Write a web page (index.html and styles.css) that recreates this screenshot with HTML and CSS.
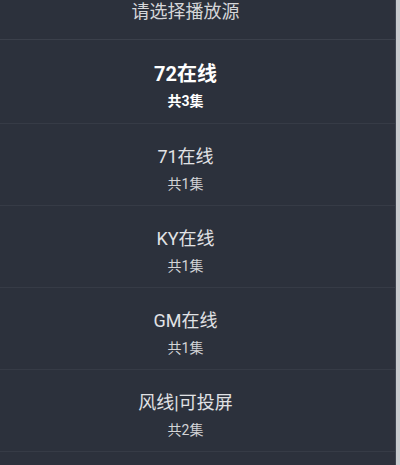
FILE: index.html
```html
<!DOCTYPE html>
<html lang="zh">
<head>
<meta charset="utf-8">
<title>请选择播放源</title>
<link rel="stylesheet" href="styles.css">
</head>
<body>
<div class="screen">
  <div class="panel">
    <div class="header">请选择播放源</div>
    <ul class="list">
      <li class="item active">
        <div class="title">72在线</div>
        <div class="sub">共3集</div>
      </li>
      <li class="item">
        <div class="title">71在线</div>
        <div class="sub">共1集</div>
      </li>
      <li class="item">
        <div class="title">KY在线</div>
        <div class="sub">共1集</div>
      </li>
      <li class="item">
        <div class="title">GM在线</div>
        <div class="sub">共1集</div>
      </li>
      <li class="item">
        <div class="title">风线|可投屏</div>
        <div class="sub">共2集</div>
      </li>
    </ul>
  </div>
  <div class="edge"></div>
</div>
</body>
</html>
```
FILE: styles.css
```css
html, body {
  margin: 0;
  padding: 0;
  height: 100%;
}
body {
  background: #2c313c;
  font-family: "Roboto", "Noto Sans CJK SC", sans-serif;
  overflow: hidden;
}
.screen {
  display: flex;
  height: 465px;
}
.panel {
  flex: 1;
  background: #2c313c;
  display: flex;
  flex-direction: column;
}
.edge {
  width: 4px;
  background: #c9cbcf;
  border-left: 1px solid #3e4450;
}
.header {
  height: 40px;
  box-sizing: border-box;
  border-bottom: 1px solid #3b404b;
  padding-right: 24px;
  text-align: center;
  font-size: 18px;
  line-height: 24px;
  color: #d5d6d9;
}
.list {
  list-style: none;
  margin: 0;
  padding: 0;
}
.item {
  height: 82px;
  box-sizing: border-box;
  padding: 21px 24px 0 0;
  border-bottom: 1px solid #363b46;
  text-align: center;
}
.item.active {
  height: 84px;
}
.title {
  font-size: 18px;
  line-height: 24px;
  color: #e1e2e5;
}
.sub {
  margin-top: 5px;
  font-size: 14px;
  line-height: 20px;
  color: #d3d4d7;
}
.active .title {
  font-size: 20px;
  line-height: 26px;
  font-weight: 700;
  color: #ffffff;
}
.active .sub {
  margin-top: 4px;
  font-weight: 700;
  color: #ffffff;
}
```
